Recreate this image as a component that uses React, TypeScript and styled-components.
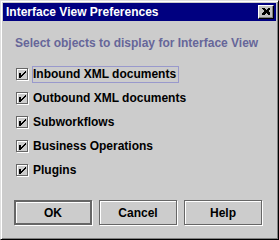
import React from 'react';
import styled, { createGlobalStyle } from 'styled-components';

const GlobalStyle = createGlobalStyle`
  html, body {
    margin: 0;
    padding: 0;
    background: #cccccc;
  }
  body {
    font-family: "Liberation Sans", Arial, sans-serif;
    font-size: 12px;
    font-weight: bold;
  }
`;

const options = [
  'Inbound XML documents',
  'Outbound XML documents',
  'Subworkflows',
  'Business Operations',
  'Plugins',
];

const checkPixels = [
  [9, 3], [8, 4], [7, 5], [6, 6], [5, 7],
  [9, 4], [8, 5], [7, 6], [6, 7], [5, 8],
];

const CheckMark = () => (
  <svg width="13" height="13" viewBox="0 0 13 13" shapeRendering="crispEdges">
    <rect x="3" y="5" width="2" height="5" fill="#000" />
    {checkPixels.map(([x, y], idx) => (
      <rect key={idx} x={x} y={y} width="1" height="1" fill="#000" />
    ))}
  </svg>
);

const CloseGlyph = () => (
  <svg width="8" height="7" viewBox="0 0 8 7" shapeRendering="crispEdges">
    <path d="M0 0h2l2 2 2-2h2v1l-2 2 2 2v2h-2l-2-2-2 2h-2v-2l2-2-2-2z" fill="#000" />
  </svg>
);

const App = () => {
  return (
    <>
      <GlobalStyle />
      <Window>
        <TitleBar>
          <span className="title">Interface View Preferences</span>
          <CloseButton>
            <CloseGlyph />
          </CloseButton>
        </TitleBar>
        <Content>
          <Prompt>Select objects to display for Interface View</Prompt>
          <OptionList>
            {options.map((label, idx) => (
              <OptionRow key={label}>
                <CheckBox>
                  <CheckMark />
                </CheckBox>
                <OptionLabel $focused={idx === 0}>{label}</OptionLabel>
              </OptionRow>
            ))}
          </OptionList>
          <ButtonRow>
            <DialogButton $default>OK</DialogButton>
            <DialogButton>Cancel</DialogButton>
            <DialogButton>Help</DialogButton>
          </ButtonRow>
        </Content>
      </Window>
    </>
  );
};

export default App;

const Window = styled.div`
  box-sizing: border-box;
  width: 279px;
  height: 240px;
  padding: 1px;
  background: #cccccc;
  border: 1px solid;
  border-color: #dfdfdf #000000 #000000 #dfdfdf;
  box-shadow: inset 1px 1px 0 #ffffff, inset -1px -1px 0 #808080;
  display: flex;
  flex-direction: column;
`;

const TitleBar = styled.div`
  height: 18px;
  margin: 1px;
  margin-bottom: 0;
  padding: 0 2px 0 3px;
  background: #000080;
  color: #ffffff;
  display: flex;
  align-items: center;
  justify-content: space-between;
  .title {
    line-height: 18px;
    white-space: nowrap;
  }
`;

const CloseButton = styled.div`
  box-sizing: border-box;
  width: 16px;
  height: 14px;
  background: #c0c0c0;
  border: 1px solid;
  border-color: #ffffff #000000 #000000 #ffffff;
  box-shadow: inset -1px -1px 0 #808080;
  display: flex;
  align-items: center;
  justify-content: center;
  padding-bottom: 1px;
`;

const Content = styled.div`
  padding: 15px 0 0 13px;
  display: flex;
  flex-direction: column;
`;

const Prompt = styled.div`
  color: #666699;
  line-height: 14px;
  white-space: nowrap;
`;

const OptionList = styled.div`
  margin-top: 12px;
  padding-left: 1px;
  display: flex;
  flex-direction: column;
`;

const OptionRow = styled.div`
  height: 24px;
  display: flex;
  align-items: center;
`;

const CheckBox = styled.div`
  box-sizing: border-box;
  width: 12px;
  height: 12px;
  margin-right: 4px;
  border: 1px solid #666666;
  box-shadow: 1px 1px 0 #ffffff, inset 1px 1px 0 #ffffff;
  position: relative;
  svg {
    position: absolute;
    left: -1px;
    top: -1px;
  }
`;

const OptionLabel = styled.span<{ $focused?: boolean }>`
  color: #000000;
  line-height: 15px;
  padding: 0 2px 0 0;
  border: 1px solid ${({ $focused }) => ($focused ? '#9999cc' : 'transparent')};
  white-space: nowrap;
`;

const ButtonRow = styled.div`
  margin-top: 18px;
  margin-left: -1px;
  display: flex;
  gap: 7px;
`;

const DialogButton = styled.div<{ $default?: boolean }>`
  box-sizing: border-box;
  width: 78px;
  height: 25px;
  border: ${({ $default }) => ($default ? '2px' : '1px')} solid #666666;
  box-shadow: 1px 1px 0 #ffffff, inset 1px 1px 0 #ffffff;
  color: #000000;
  display: flex;
  align-items: center;
  justify-content: center;
`;
